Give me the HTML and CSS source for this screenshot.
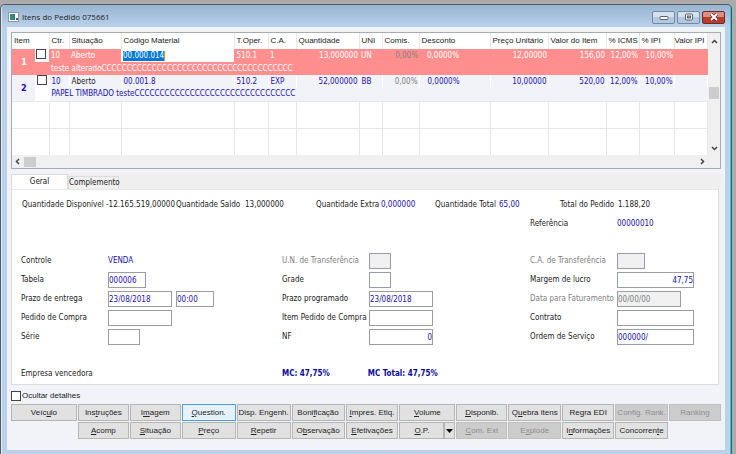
FILE: index.html
```html
<!DOCTYPE html>
<html lang="pt-BR">
<head>
  <meta charset="utf-8">
  <title>Itens do Pedido 075661</title>
  <link rel="stylesheet" href="styles.css">
</head>
<body>
  <div class="window">
    <div class="titlebar">
      <svg class="app-icon" width="11" height="10" viewBox="0 0 11 10">
        <rect x="0.5" y="0.5" width="10" height="9" fill="#fff" stroke="#8a99a8"/>
        <rect x="2" y="2" width="4" height="6" fill="#2f8f7a"/>
        <rect x="6" y="2" width="1" height="6" fill="#3a5f9a"/>
        <rect x="8" y="6" width="2" height="2" fill="#555"/>
      </svg>
      <h1>Itens do Pedido 075661</h1>
      <div class="controls">
        <button aria-label="Minimizar"><svg width="10" height="8" viewBox="0 0 10 8"><rect x="1" y="3.5" width="8" height="3" rx="1" fill="#fff" stroke="#555e6b"/></svg></button>
        <button aria-label="Maximizar"><svg width="10" height="8" viewBox="0 0 10 8"><rect x="1.5" y="1" width="7" height="6" rx="1" fill="#fff" stroke="#555e6b"/><rect x="3.5" y="3" width="3" height="2" fill="#9fb6d2" stroke="#555e6b"/></svg></button>
        <button class="close" aria-label="Fechar"><svg width="10" height="8" viewBox="0 0 10 8"><path d="M2 1l6 6M8 1l-6 6" stroke="#5a3030" stroke-width="3.4"/><path d="M2 1l6 6M8 1l-6 6" stroke="#fff" stroke-width="2"/></svg></button>
      </div>
    </div>

    <div class="content">
      <div class="list">
        <div class="list-body">
          <table>
            <colgroup>
              <col class="c-item"><col class="c-check"><col class="c-ctr"><col class="c-sit"><col class="c-cod">
              <col class="c-oper"><col class="c-ca"><col class="c-qtd"><col class="c-uni"><col class="c-com">
              <col class="c-desc"><col class="c-preco"><col class="c-valor"><col class="c-icms"><col class="c-ipi"><col>
            </colgroup>
            <thead>
              <tr>
                <th colspan="2">Item</th><th>Ctr.</th><th>Situação</th><th>Código Material</th><th>T.Oper.</th><th>C.A.</th>
                <th>Quantidade</th><th>UNI</th><th>Comis.</th><th>Desconto</th><th>Preço Unitário</th><th>Valor do Item</th>
                <th>% ICMS</th><th>% IPI</th><th>Valor IPI</th>
              </tr>
            </thead>
            <tbody class="selected">
              <tr>
                <td class="item" rowspan="2">1</td>
                <td class="check"><input type="checkbox" aria-label="Item 1"></td>
                <td>10</td><td>Aberto</td>
                <td class="edit"><input type="text" value="00.000.014" aria-label="Código Material"></td>
                <td>510.1</td><td>1</td><td class="num">13,000000</td><td>UN</td><td class="num off">0,00%</td>
                <td class="desc">0,0000%</td><td class="num">12,00000</td><td class="num">156,00</td>
                <td class="num">12,00%</td><td class="num">10,00%</td><td></td>
              </tr>
              <tr><td></td><td class="text" colspan="5">teste alteradoCCCCCCCCCCCCCCCCCCCCCCCCCCCCCCCCCCCCCC</td><td colspan="9"></td></tr>
            </tbody>
            <tbody class="row">
              <tr>
                <td class="item" rowspan="2">2</td>
                <td class="check" rowspan="2"><input type="checkbox" aria-label="Item 2"></td>
                <td>10</td><td class="black">Aberto</td><td>00.001.8</td>
                <td>510.2</td><td>EXP</td><td class="num">52,000000</td><td>BB</td><td class="num off">0,00%</td>
                <td class="desc">0,0000%</td><td class="num">10,00000</td><td class="num">520,00</td>
                <td class="num">12,00%</td><td class="num">10,00%</td><td></td>
              </tr>
              <tr><td class="text" colspan="5">PAPEL TIMBRADO testeCCCCCCCCCCCCCCCCCCCCCCCCCCCCCCCC</td><td colspan="9"></td></tr>
            </tbody>
            <tbody class="empty">
              <tr><td colspan="2"></td><td></td><td></td><td></td><td></td><td></td><td></td><td></td><td></td><td></td><td></td><td></td><td></td><td></td><td></td></tr>
              <tr><td colspan="2"></td><td></td><td></td><td></td><td></td><td></td><td></td><td></td><td></td><td></td><td></td><td></td><td></td><td></td><td></td></tr>
            </tbody>
          </table>
          <div class="vscroll">
            <svg width="7" height="5" viewBox="0 0 7 5"><path d="M1 4l2.500-2.500 2.500 2.500" fill="none" stroke="#444" stroke-width="1.500"/></svg>
            <div class="thumb"></div>
            <svg width="7" height="5" viewBox="0 0 7 5"><path d="M1 1l2.500 2.500 2.500-2.500" fill="none" stroke="#444" stroke-width="1.500"/></svg>
          </div>
        </div>
        <div class="hscroll">
          <svg width="5" height="7" viewBox="0 0 5 7"><path d="M4 1l-2.500 2.500 2.500 2.500" fill="none" stroke="#444" stroke-width="1.500"/></svg>
          <div class="thumb"></div>
          <svg width="5" height="7" viewBox="0 0 5 7"><path d="M1 1l2.500 2.500-2.500 2.500" fill="none" stroke="#444" stroke-width="1.500"/></svg>
        </div>
      </div>

      <div class="tabs">
        <button class="tab active">Geral</button>
        <button class="tab">Complemento</button>
      </div>

      <div class="panel">
        <div class="totals">
          <span>Quantidade Disponível</span><span>-12.165.519,00000</span>
          <span>Quantidade Saldo</span><span>13,000000</span>
          <span>Quantidade Extra</span><span class="blue">0,000000</span>
          <span>Quantidade Total</span><span class="blue">65,00</span>
          <span>Total do Pedido</span><span>1.188,20</span>
        </div>
        <div class="cols reference">
          <div class="field last"><span>Referência</span><span class="blue">00000010</span></div>
        </div>

        <div class="cols">
          <div class="group">
            <div class="field"><span>Controle</span><span class="blue">VENDA</span></div>
            <div class="field"><label for="tabela">Tabela</label><input class="w38" id="tabela" value="000006"></div>
            <div class="field"><label for="entrega">Prazo de entrega</label><input class="w64" id="entrega" value="23/08/2018"><input class="w38" value="00:00" aria-label="Hora de entrega"></div>
            <div class="field"><label for="pedido">Pedido de Compra</label><input class="w64" id="pedido"></div>
            <div class="field"><label for="serie">Série</label><input class="w32" id="serie"></div>
          </div>
          <div class="group">
            <div class="field"><label class="off" for="un">U.N. de Transferência</label><input class="w22" id="un" disabled></div>
            <div class="field"><label for="grade">Grade</label><input class="w22" id="grade"></div>
            <div class="field"><label for="programado">Prazo programado</label><input class="w64" id="programado" value="23/08/2018"></div>
            <div class="field"><label for="item-pedido">Item Pedido de Compra</label><input class="w64" id="item-pedido"></div>
            <div class="field"><label for="nf">NF</label><input class="w64 right" id="nf" value="0"></div>
          </div>
          <div class="group">
            <div class="field"><label class="off" for="ca">C.A. de Transferência</label><input class="w28" id="ca" disabled></div>
            <div class="field"><label for="margem">Margem de lucro</label><input class="w77 right" id="margem" value="47,75"></div>
            <div class="field"><label class="off" for="faturamento">Data para Faturamento</label><input class="w64" id="faturamento" value="00/00/00" disabled></div>
            <div class="field"><label for="contrato">Contrato</label><input class="w77" id="contrato"></div>
            <div class="field"><label for="ordem">Ordem de Serviço</label><input class="w77" id="ordem" value="000000/"></div>
          </div>
        </div>

        <div class="cols winner">
          <span>Empresa vencedora</span>
          <div class="mc"><b>MC: 47,75%</b><b>MC Total: 47,75%</b></div>
        </div>
      </div>

      <label class="hide"><input type="checkbox">Ocultar detalhes</label>

      <div class="buttons">
        <button>Veíc<u>u</u>lo</button>
        <button>Ins<u>t</u>ruções</button>
        <button>I<u>m</u>agem</button>
        <button class="focus"><u>Q</u>uestion.</button>
        <button>Disp. Engenh.</button>
        <button>Boni<u>f</u>icação</button>
        <button><u>I</u>mpres. Etiq.</button>
        <button><u>V</u>olume</button>
        <button><u>D</u>isponib.</button>
        <button>Q<u>u</u>ebra itens</button>
        <button>Regra EDI</button>
        <button disabled>Config. Rank.</button>
        <button disabled>Ranking</button>
        <button class="second"><u>A</u>comp</button>
        <button><u>S</u>ituação</button>
        <button><u>P</u>reço</button>
        <button><u>R</u>epetir</button>
        <button>O<u>b</u>servação</button>
        <button><u>E</u>fetivações</button>
        <div class="split">
          <button><u>O</u>.P.</button>
          <button class="arrow" aria-label="Mais opções"><svg width="7" height="4" viewBox="0 0 7 4"><path d="M0 0h7L3.500 4z"/></svg></button>
        </div>
        <button disabled><u>C</u>om. Ext</button>
        <button disabled>E<u>x</u>plode</button>
        <button>I<u>n</u>formações</button>
        <button>Concorren<u>t</u>e</button>
      </div>
    </div>
  </div>
</body>
</html>
```
FILE: styles.css
```css
* {
  box-sizing: border-box;
}

body {
  margin: 0;
  padding: 4px 4px 0 0;
  background-color: #ababab;
  color: #222;
  font: 8px/12px "DejaVu Sans Condensed", "DejaVu Sans", sans-serif;
}

button, input {
  margin: 0;
  padding: 0;
  font: inherit;
  color: inherit;
}

.window {
  min-height: calc(100vh - 4px);
  padding: 0 6px 5px;
  background-color: #b9d1ea;
  border: 1px solid #555b63;
  border-right-color: #2a5f6c;
  border-bottom: 0;
  border-radius: 5px 5px 0 0;
  box-shadow: inset -1px 0 #35c3dc, inset 1px 0 #dfeaf6;
}

/* title bar */

.titlebar {
  display: flex;
  align-items: center;
  gap: 3px;
  height: 22px;
  margin: 0 -5px;
  padding: 2px 5px 0 6px;
  background: linear-gradient(#98b4d2, #b9d1ea);
  border-radius: 4px 4px 0 0;
}

.titlebar h1 {
  flex: 1;
  margin: 0;
  font: 8px/12px "Open Sans", sans-serif;
}

.controls {
  display: flex;
  gap: 2px;
}

.controls button {
  display: flex;
  align-items: center;
  justify-content: center;
  width: 23px;
  height: 13px;
  background: linear-gradient(#d3e1f0 50%, #b3c9e1 50%);
  border: 1px solid #7488a0;
  border-radius: 2px;
}

.controls .close {
  background: linear-gradient(#dc8f80 50%, #b93b2a 50%);
  border-color: #6d2a2a;
}

.content {
  min-height: calc(100vh - 31px);
  padding: 5px 4px 10px;
  background-color: #f1f3f9;
}

/* item list */

.list {
  background-color: #fff;
  border: 1px solid #a9abb3;
}

.list-body {
  display: flex;
}

table {
  flex: 1;
  table-layout: fixed;
  width: 100%;
  border-collapse: collapse;
  color: #1a0fae;
}

.c-item { width: 23px; }
.c-check { width: 14px; }
.c-ctr { width: 20px; }
.c-sit { width: 52px; }
.c-cod { width: 113px; }
.c-oper { width: 34px; }
.c-ca { width: 28px; }
.c-qtd { width: 63px; }
.c-uni { width: 23px; }
.c-com { width: 37px; }
.c-desc { width: 71px; }
.c-preco { width: 58px; }
.c-valor { width: 58px; }
.c-icms { width: 33px; }
.c-ipi { width: 35px; }

th {
  height: 16px;
  padding: 0 0 0 2px;
  border-right: 1px solid #e6e6e6;
  color: #222;
  font: 8px/12px "Liberation Sans", sans-serif;
  text-align: left;
  white-space: nowrap;
}

th:last-child {
  padding-left: 0;
}

td {
  height: 13px;
  padding: 0 1px 0 2px;
  line-height: 12px;
  white-space: nowrap;
}

td.item {
  font-size: 9px;
  font-weight: bold;
  text-align: center;
}

td.check {
  padding: 0 1px;
  background-color: #fff;
  vertical-align: top;
}

td.num {
  text-align: right;
}

td.desc {
  padding-left: 8px;
}

td.off, .off {
  color: #808080;
}

td.text {
  overflow: hidden;
}

td.black {
  color: #222;
}

.selected {
  background-color: #ff8f8f;
  color: #fff;
}

.row {
  background-color: #f1f3f9;
}

.row tr:first-child td {
  border-right: 1px solid #fff;
}

td.edit {
  background-color: #fff;
  border-right: 1px solid #ff8f8f;
}

.edit input {
  display: block;
  width: 42px;
  height: 10px;
  background-color: #0078d7;
  border: 0;
  border-right: 1px solid #e8883a;
  color: #fff;
}

.empty td {
  height: 27px;
  border-top: 1px solid #e6e6e6;
  border-right: 1px solid #e6e6e6;
}

input[type="checkbox"] {
  appearance: none;
  display: block;
  width: 10px;
  height: 10px;
  background-color: #fff;
  border: 1px solid #444;
}

.vscroll {
  display: flex;
  flex-direction: column;
  align-items: center;
  width: 12px;
  padding: 6px 0 4px;
  background-color: #f0f0f0;
}

.vscroll .thumb {
  width: 10px;
  height: 12px;
  margin: 43px 0 auto;
  background-color: #cdcdcd;
}

.hscroll {
  display: flex;
  align-items: center;
  height: 13px;
  padding: 0 15px 0 3px;
  background-color: #f0f0f0;
}

.hscroll .thumb {
  width: 12px;
  height: 10px;
  margin: 0 auto 0 4px;
  background-color: #cdcdcd;
}

/* tabs and details */

.tabs {
  display: flex;
  align-items: flex-end;
  height: 15px;
  margin-top: 5px;
  background-color: #efefef;
}

.tab {
  width: 51px;
  height: 13px;
  background-color: #f0f0f0;
  border: 1px solid #dcdcdc;
  border-bottom: 0;
}

.tab.active {
  width: 57px;
  height: 15px;
  background-color: #fff;
}

.panel {
  padding: 9px 9px 4px;
  background-color: #fff;
  border: 1px solid #dcdcdc;
  border-top-color: #e6e6e6;
  margin-right: 2px;
}

.totals {
  display: grid;
  grid-template-columns: 84fr 70fr 69fr 71fr 65fr 54fr 64fr 61fr 58fr 91fr;
  padding-left: 1px;
  white-space: nowrap;
}

.blue {
  color: #1a0fae;
}

.cols {
  display: grid;
  grid-template-columns: 261fr 248fr 179fr;
}

.reference {
  margin: 5px 0 21px;
}

.last {
  grid-column: 3;
}

.group {
  display: flex;
  flex-direction: column;
  gap: 3px;
}

.field {
  display: flex;
  align-items: center;
  gap: 4px;
  height: 16px;
}

.field :first-child {
  width: 83px;
  white-space: nowrap;
}

.field input {
  height: 16px;
  background-color: #fff;
  border: 1px solid #9a9ca6;
  color: #1a0fae;
}

.field input:disabled {
  background-color: #f0f0f0;
  color: #808080;
}

.w22 { width: 22px; }
.w28 { width: 28px; }
.w32 { width: 32px; }
.w38 { width: 38px; }
.w64 { width: 64px; }
.w77 { width: 77px; }

.field .right {
  text-align: right;
}

.winner {
  margin-top: 23px;
}

.mc {
  display: flex;
  gap: 38px;
  color: #0a0a9c;
  white-space: nowrap;
}

/* footer */

.hide {
  display: flex;
  align-items: center;
  gap: 1px;
  width: max-content;
  margin: 5px 0 2px;
  font-family: "Liberation Sans", sans-serif;
}

.buttons {
  display: grid;
  grid-template-columns: 66fr 51fr 51fr 54fr 54fr 53fr 53fr 56fr 51fr 53fr 52fr 53fr 52fr;
  gap: 1px;
}

.buttons button {
  height: 17px;
  background-color: #e1e1e1;
  border: 1px solid #b5b5b5;
  font-family: "Liberation Sans", sans-serif;
  white-space: nowrap;
}

.buttons .focus {
  background-color: #e5f1fb;
  border-color: #4d9fe0;
}

.buttons button:disabled {
  background-color: #cccccc;
  border-color: #bfbfbf;
  color: #8c8c8c;
}

.buttons .second {
  grid-column: 2;
}

.split {
  display: flex;
}

.split button {
  flex: 1;
}

.split .arrow {
  flex: none;
  display: flex;
  align-items: center;
  justify-content: center;
  width: 11px;
}
```
